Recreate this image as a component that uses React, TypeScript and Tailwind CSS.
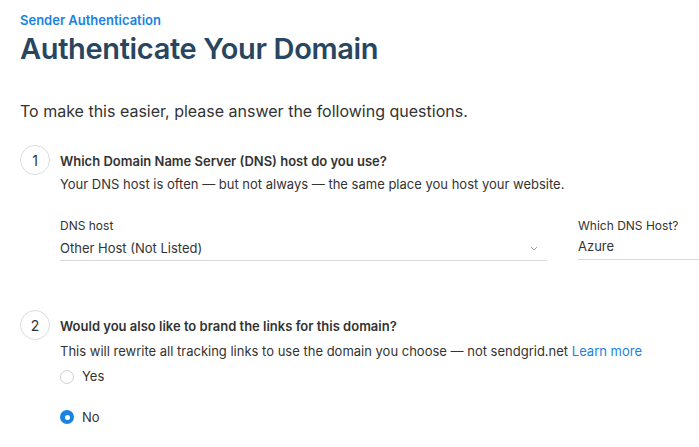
import React from "react";

const font = { fontFamily: "Inter, 'Noto Sans', sans-serif" };

function Step({ n, children }: { n: number; children: React.ReactNode }) {
  return (
    <div className="flex items-start">
      <div className="w-[30px] h-[30px] shrink-0 rounded-full border border-[#d7dde3] flex items-center justify-center text-[14px] text-[#333] mr-[10px] -mt-[7px]">
        {n}
      </div>
      <div className="flex-1 min-w-0">{children}</div>
    </div>
  );
}

function Radio({ checked, label }: { checked?: boolean; label: string }) {
  return (
    <label className="flex items-center gap-[8px] text-[13px] text-[#333]">
      {checked ? (
        <span className="w-[14px] h-[14px] rounded-full bg-[#1A82E2] flex items-center justify-center">
          <span className="w-[5px] h-[5px] rounded-full bg-white" />
        </span>
      ) : (
        <span className="w-[14px] h-[14px] rounded-full border border-[#ccd3da] bg-white" />
      )}
      {label}
    </label>
  );
}

export default function App() {
  return (
    <div className="w-[699px] h-[447px] overflow-hidden bg-white pl-[20px] pt-[11px]" style={font}>
      <div className="text-[13px] font-semibold text-[#1A82E2] leading-[18px]">Sender Authentication</div>
      <h1 className="text-[29px] font-semibold text-[#294661] leading-[36px] mt-[2px] tracking-[-0.35px]">
        Authenticate Your Domain
      </h1>

      <p className="text-[16px] text-[#333] leading-[20px] mt-[34px]">
        To make this easier, please answer the following questions.
      </p>

      <div className="mt-[31px]">
        <Step n={1}>
          <div className="text-[13px] font-semibold text-[#333] leading-[18px]">
            Which Domain Name Server (DNS) host do you use?
          </div>
          <div className="text-[13px] text-[#333] leading-[18px] mt-[5px]">
            Your DNS host is often — but not always — the same place you host your website.
          </div>
          <div className="flex mt-[25px]">
            <div className="w-[487px]">
              <div className="text-[12px] text-[#333] leading-[16px]">DNS host</div>
              <div className="flex items-center justify-between border-b border-[#d4d8dd] h-[27px] pt-[4px] pr-[9px]">
                <span className="text-[13px] text-[#333]">Other Host (Not Listed)</span>
                <svg width="8" height="5" viewBox="0 0 8 5" fill="none" className="-mt-[1px]">
                  <path d="M1 1l3 3 3-3" stroke="#9aa3ad" strokeWidth="1" />
                </svg>
              </div>
            </div>
            <div className="ml-[31px] flex-1">
              <div className="text-[12px] text-[#333] leading-[16px]">Which DNS Host?</div>
              <div className="border-b border-[#d4d8dd] h-[26px] flex items-center">
                <span className="text-[13px] text-[#333]">Azure</span>
              </div>
            </div>
          </div>
        </Step>
      </div>

      <div className="mt-[56px]">
        <Step n={2}>
          <div className="text-[13px] font-semibold text-[#333] leading-[18px]">
            Would you also like to brand the links for this domain?
          </div>
          <div className="text-[13px] text-[#333] leading-[18px] mt-[7px]">
            This will rewrite all tracking links to use the domain you choose — not sendgrid.net{" "}
            <a className="text-[#1A82E2]">Learn more</a>
          </div>
          <div className="mt-[7px] flex flex-col gap-[21px]">
            <Radio label="Yes" />
            <Radio checked label="No" />
          </div>
        </Step>
      </div>
    </div>
  );
}
